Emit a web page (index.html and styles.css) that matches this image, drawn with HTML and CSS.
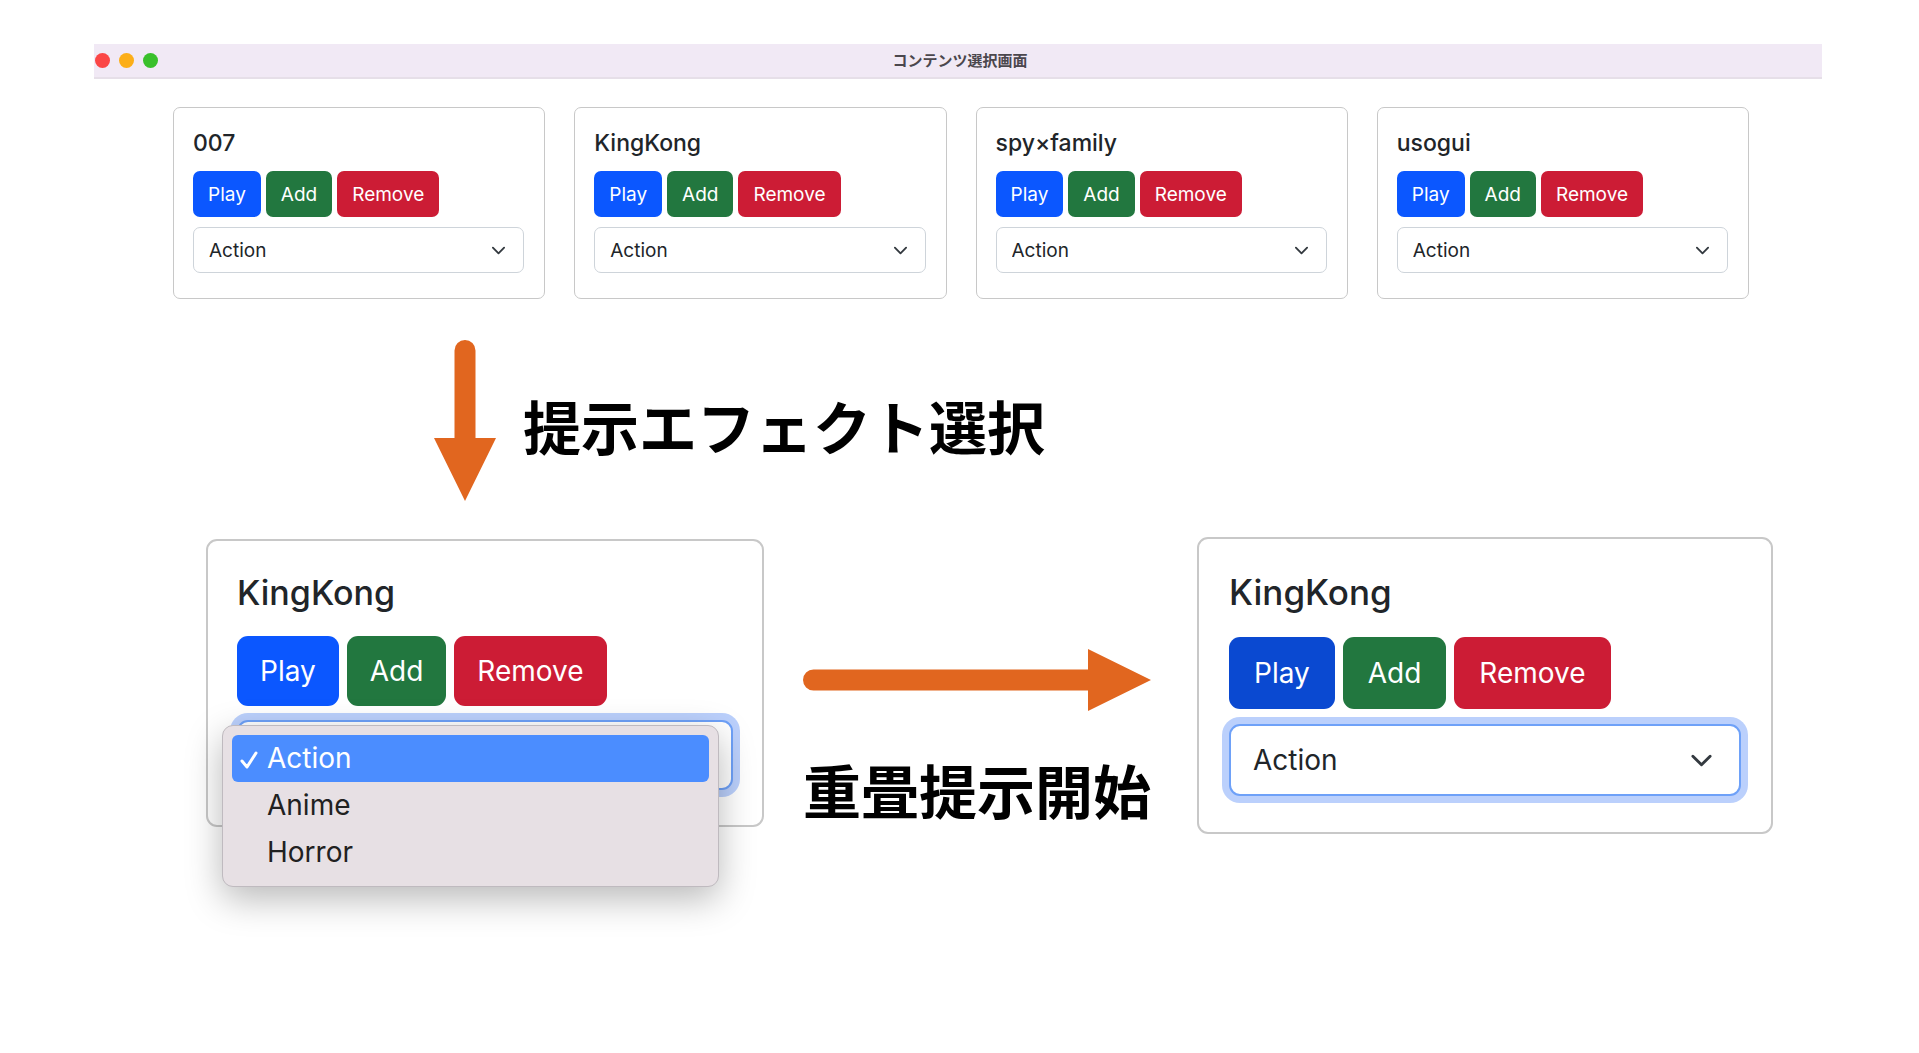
FILE: index.html
```html
<!DOCTYPE html>
<html lang="ja">
<head>
<meta charset="utf-8">
<meta name="viewport" content="width=device-width, initial-scale=1">
<title>コンテンツ選択画面</title>
<link rel="stylesheet" href="styles.css">
</head>
<body>
<header class="titlebar">
  <div class="lights">
    <span class="light light-close"></span>
    <span class="light light-minimize"></span>
    <span class="light light-zoom"></span>
  </div>
  <h1 class="titlebar-title">コンテンツ選択画面</h1>
</header>

<main>
  <section class="contents">
    <article class="card">
      <h2 class="card-title">007</h2>
      <div class="actions">
        <button type="button" class="btn btn-play">Play</button>
        <button type="button" class="btn btn-add">Add</button>
        <button type="button" class="btn btn-remove">Remove</button>
      </div>
      <select class="effect" aria-label="007 effect"><option>Action</option><option>Anime</option><option>Horror</option></select>
    </article>
    <article class="card">
      <h2 class="card-title">KingKong</h2>
      <div class="actions">
        <button type="button" class="btn btn-play">Play</button>
        <button type="button" class="btn btn-add">Add</button>
        <button type="button" class="btn btn-remove">Remove</button>
      </div>
      <select class="effect" aria-label="KingKong effect"><option>Action</option><option>Anime</option><option>Horror</option></select>
    </article>
    <article class="card">
      <h2 class="card-title">spy×family</h2>
      <div class="actions">
        <button type="button" class="btn btn-play">Play</button>
        <button type="button" class="btn btn-add">Add</button>
        <button type="button" class="btn btn-remove">Remove</button>
      </div>
      <select class="effect" aria-label="spy×family effect"><option>Action</option><option>Anime</option><option>Horror</option></select>
    </article>
    <article class="card">
      <h2 class="card-title">usogui</h2>
      <div class="actions">
        <button type="button" class="btn btn-play">Play</button>
        <button type="button" class="btn btn-add">Add</button>
        <button type="button" class="btn btn-remove">Remove</button>
      </div>
      <select class="effect" aria-label="usogui effect"><option>Action</option><option>Anime</option><option>Horror</option></select>
    </article>
  </section>

  <section class="step-select">
    <svg class="arrow" width="62" height="161" viewBox="0 0 62 161" aria-hidden="true"><path d="M20.500 10.500a10.500 10.500 0 0 1 21 0V98H62L31 161 0 98h20.500z"/></svg>
    <p class="caption">提示エフェクト選択</p>
  </section>

  <section class="flow">
    <article class="card card-large card-choosing">
      <h2 class="card-title">KingKong</h2>
      <div class="actions">
        <button type="button" class="btn btn-play">Play</button>
        <button type="button" class="btn btn-add">Add</button>
        <button type="button" class="btn btn-remove">Remove</button>
      </div>
      <div class="effect-open">
        <select class="effect effect-focus" aria-label="Effect being chosen"><option>Action</option><option>Anime</option><option>Horror</option></select>
        <ul class="menu" role="listbox" aria-label="Effects">
          <li class="menu-item menu-item-active" role="option" aria-selected="true"><svg class="check" width="18" height="20" viewBox="0 0 18 20" aria-hidden="true"><path d="M2 11l5 6L16 3"/></svg>Action</li>
          <li class="menu-item" role="option" aria-selected="false">Anime</li>
          <li class="menu-item" role="option" aria-selected="false">Horror</li>
        </ul>
      </div>
    </article>

    <div class="step-start">
      <svg class="arrow" width="348" height="62" viewBox="0 0 348 62" aria-hidden="true"><path d="M10.500 20.500H285V0l63 31-63 31V41.500H10.500a10.500 10.500 0 0 1 0-21z"/></svg>
      <p class="caption">重畳提示開始</p>
    </div>

    <article class="card card-large">
      <h2 class="card-title">KingKong</h2>
      <div class="actions">
        <button type="button" class="btn btn-play btn-pressed">Play</button>
        <button type="button" class="btn btn-add">Add</button>
        <button type="button" class="btn btn-remove">Remove</button>
      </div>
      <select class="effect effect-focus" aria-label="Chosen effect"><option>Action</option><option>Anime</option><option>Horror</option></select>
    </article>
  </section>
</main>
</body>
</html>
```
FILE: styles.css
```css
*,
*::before,
*::after {
  box-sizing: border-box;
}

body {
  min-height: 100vh;
  margin: 0;
  padding: 44px 0 120px;
  background: #fff;
  color: #212529;
  font-family: Inter, "Noto Sans CJK JP", sans-serif;
}

h1,
h2,
p,
ul {
  margin: 0;
  padding: 0;
}

/* Window title bar */
.titlebar {
  display: grid;
  grid-template-columns: 1fr auto 1fr;
  align-items: center;
  height: 35px;
  margin: 0 97px 0 94px;
  border-bottom: 2px solid #e6dfe8;
  background: #f1e9f5;
}

.lights {
  display: flex;
  gap: 9px;
  padding-left: 1px;
}

.light {
  width: 15px;
  height: 15px;
  border-radius: 50%;
}

.light-close { background: #fb4646; }
.light-minimize { background: #fcae18; }
.light-zoom { background: #39c02b; }

.titlebar-title {
  padding: 0 0 2px 4px;
  color: #4b474d;
  font-family: "Noto Sans CJK JP", sans-serif;
  font-size: 15px;
  font-weight: 700;
  line-height: 20px;
}

/* Cards */
.contents {
  display: grid;
  grid-template-columns: repeat(4, 1fr);
  gap: 29px;
  margin: 28px 170px 0 173px;
}

.card {
  padding: 19px 20px 25px 19px;
  border: 1px solid #c8c8c8;
  border-radius: 7px;
  background: #fff;
}

.card-title {
  margin-bottom: 12px;
  font-size: 23px;
  font-weight: 500;
  line-height: 32px;
}

.actions {
  display: flex;
  gap: 5px;
  margin-bottom: 10px;
}

.btn {
  height: 46px;
  padding: 0 15px;
  border: 0;
  border-radius: 7px;
  color: #fff;
  font-family: inherit;
  font-size: 19px;
}

.btn-play { background: #0b57ff; }
.btn-add { background: #22773f; }
.btn-remove { background: #cc1c35; }
.btn-pressed { background: #0a49d1; }

.effect {
  display: block;
  width: 100%;
  height: 46px;
  padding: 0 15px;
  appearance: none;
  border: 1px solid #ced4da;
  border-radius: 7px;
  background: #fff url("data:image/svg+xml,%3Csvg xmlns='http://www.w3.org/2000/svg' viewBox='0 0 16 16'%3E%3Cpath fill='none' stroke='%23343a40' stroke-linecap='round' stroke-linejoin='round' stroke-width='2' d='m2 5 6 6 6-6'/%3E%3C/svg%3E") no-repeat right 17px center / 15px 15px;
  color: #212529;
  font-family: inherit;
  font-size: 19px;
}

/* Captions and arrows */
.arrow {
  display: block;
  flex: none;
  fill: #e1661f;
}

.caption {
  color: #000;
  font-family: "Noto Sans CJK JP", sans-serif;
  font-size: 58px;
  font-weight: 700;
  line-height: 80px;
  white-space: nowrap;
}

.step-select {
  display: flex;
  align-items: center;
  gap: 27px;
  margin: 41px 170px 0 434px;
}

.step-select .caption {
  padding-top: 8px;
}

/* Enlarged cards */
.flow {
  display: grid;
  grid-template-columns: 558fr 355px 576fr;
  align-items: start;
  margin: 36px 146px 0 206px;
  column-gap: 39px;
}

.card-large {
  padding: 31px 30px 36px;
  border-width: 2px;
  border-radius: 11px;
}

.card-large .card-title {
  margin-bottom: 23px;
  font-size: 35px;
  line-height: 44px;
}

.card-large .actions {
  gap: 8px;
  margin-bottom: 15px;
}

.card-large .btn {
  height: 72px;
  padding: 0 25px;
  border-radius: 11px;
  font-size: 28px;
}

.card-large .effect {
  height: 72px;
  padding: 0 22px;
  border-width: 2px;
  border-radius: 11px;
  background-position: right 26px center;
  background-size: 23px 23px;
  font-size: 28px;
}

.card-large .effect-focus {
  border-color: #6ea1f8;
  box-shadow: 0 0 0 7px #bbd0fc;
}

/* The card whose effect menu is open is drawn slightly smaller */
.card-choosing {
  margin-top: 2px;
  padding: 30px 29px 35px;
}

.card-choosing .card-title {
  margin-bottom: 21px;
  font-size: 34px;
}

.card-choosing .actions {
  margin-bottom: 14px;
}

.card-choosing .btn {
  height: 70px;
  padding: 0 23px;
}

.card-choosing .effect {
  height: 70px;
}

.effect-open {
  position: relative;
}

.menu {
  position: absolute;
  top: 5px;
  right: 14px;
  left: -15px;
  padding: 9px 9px 10px;
  border: 1px solid #bfbabf;
  border-radius: 11px;
  background: #e7e0e4;
  box-shadow: 0 12px 36px rgba(0, 0, 0, 0.28);
  list-style: none;
}

.menu-item {
  position: relative;
  padding-left: 35px;
  border-radius: 6px;
  color: #212121;
  font-size: 28px;
  line-height: 47px;
}

.menu-item-active {
  background: #4b8dff;
  color: #fff;
}

.check {
  position: absolute;
  top: 15px;
  left: 8px;
  fill: none;
  stroke: currentColor;
  stroke-linecap: round;
  stroke-linejoin: round;
  stroke-width: 3;
}

.step-start {
  display: grid;
  gap: 38px;
  justify-items: start;
  margin-top: 112px;
}
```
